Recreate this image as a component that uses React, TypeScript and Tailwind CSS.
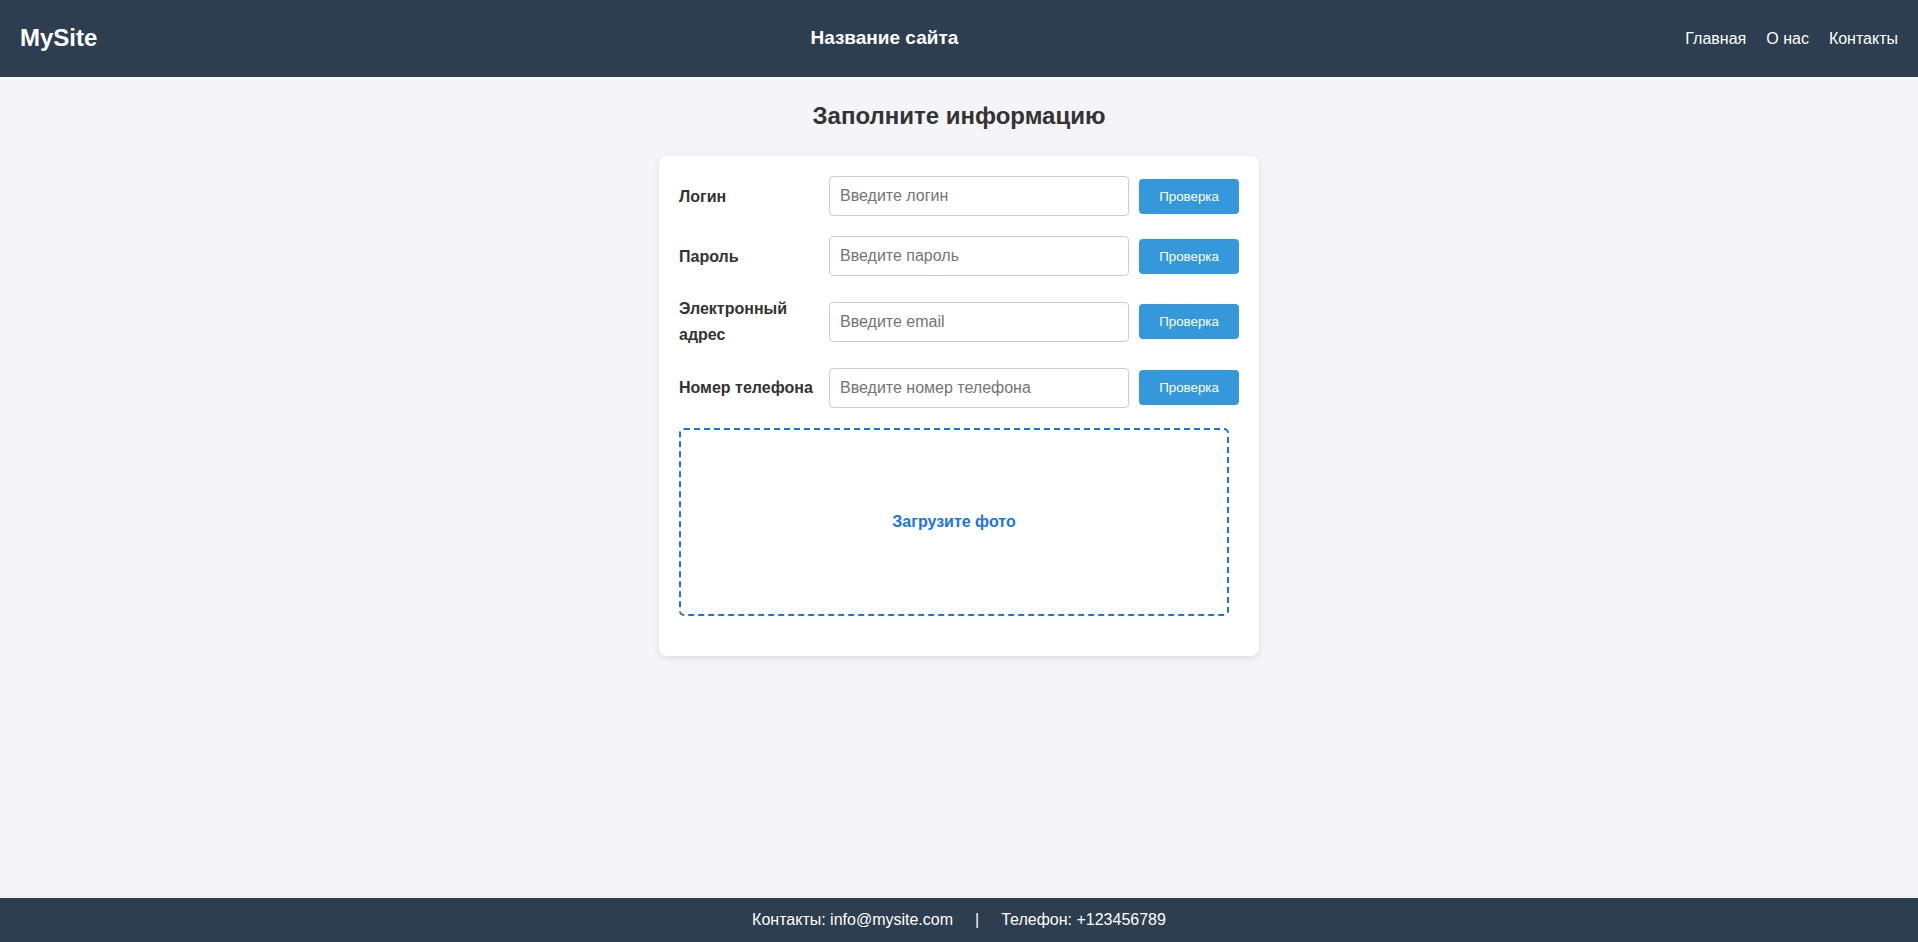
import React from "react";

const rows = [
  { label: "Логин", placeholder: "Введите логин", type: "text" },
  { label: "Пароль", placeholder: "Введите пароль", type: "password" },
  { label: "Электронный адрес", placeholder: "Введите email", type: "email" },
  { label: "Номер телефона", placeholder: "Введите номер телефона", type: "tel" },
];

export default function App() {
  return (
    <div className="min-h-screen flex flex-col bg-[#f4f4f9] font-['Liberation_Sans',Arial,sans-serif] leading-[1.6]">
      <header className="h-[77px] shrink-0 bg-[#2c3e50] text-white flex items-center justify-between px-5">
        <div className="text-[24px] font-bold">MySite</div>
        <div className="text-[19px] font-bold mr-[14px]">Название сайта</div>
        <nav className="flex gap-5 text-[16px]">
          <a href="#">Главная</a>
          <a href="#">О нас</a>
          <a href="#">Контакты</a>
        </nav>
      </header>

      <main className="flex-1 flex flex-col items-center pt-[20px]">
        <h2 className="text-[24px] font-bold text-[#333] leading-[1.6] mb-[21px]">
          Заполните информацию
        </h2>
        <div className="w-[600px] bg-white rounded-lg shadow-[0_2px_6px_rgba(0,0,0,0.1)] p-5 pb-10 flex flex-col gap-5">
          {rows.map((r) => (
            <div key={r.label} className="flex items-center gap-[10px]">
              <label className="w-[140px] shrink-0 text-[16px] font-bold text-[#333] leading-[1.6]">
                {r.label}
              </label>
              <input
                type={r.type}
                placeholder={r.placeholder}
                className="flex-1 min-w-0 h-[40px] px-[10px] border border-[#ccc] rounded-[4px] text-[16px] text-[#333] placeholder:text-[#757575] bg-white outline-none"
              />
              <button className="w-[100px] h-[35px] shrink-0 bg-[#3498db] text-white text-[13.33px] rounded-[4px]">
                Проверка
              </button>
            </div>
          ))}
          <div className="w-[550px] h-[188px] border-2 border-dashed border-[#1a73e8] rounded-[5px] flex items-center justify-center">
            <span className="text-[16px] font-bold text-[#1a73e8]">Загрузите фото</span>
          </div>
        </div>
      </main>

      <footer className="h-[44px] shrink-0 bg-[#2c3e50] text-white flex items-center justify-center text-[16px]">
        <span>Контакты: info@mysite.com</span>
        <span className="mx-[22px]">|</span>
        <span>Телефон: +123456789</span>
      </footer>
    </div>
  );
}
